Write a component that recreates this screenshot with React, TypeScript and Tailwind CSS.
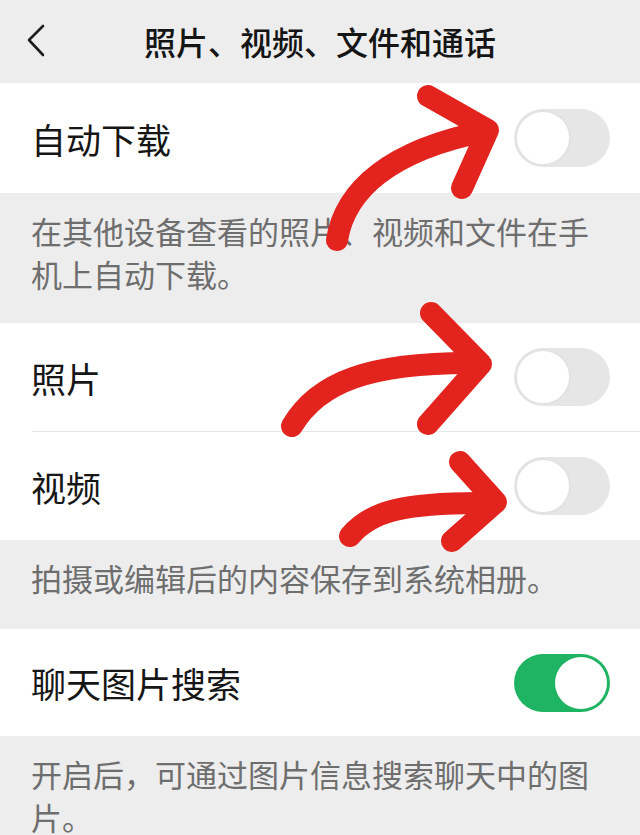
import React from 'react'

const font = { fontFamily: '"Noto Sans CJK SC", "Noto Sans", sans-serif' }

function Toggle({ on = false }: { on?: boolean }) {
  if (on) {
    return (
      <div className="w-[96px] h-[58px] rounded-full bg-[#1fb463] flex items-center justify-end pr-[3px]">
        <div className="w-[52px] h-[52px] rounded-full bg-white" />
      </div>
    )
  }
  return (
    <div className="w-[96px] h-[58px] rounded-full bg-[#e6e6e6] flex items-center pl-[1px]">
      <div className="w-[56px] h-[56px] rounded-full bg-white border-2 border-[#e2e2e2]" />
    </div>
  )
}

function Row({ label, on, h = 'h-[108px]' }: { label: string; on?: boolean; h?: string }) {
  return (
    <div className={`${h} bg-white flex items-center justify-between pl-[31px] pr-[30px]`}>
      <span className="text-[35px] leading-none text-[#161616]">{label}</span>
      <Toggle on={on} />
    </div>
  )
}

function Note({ children, pb = 'pb-[28px]' }: { children: React.ReactNode; pb?: string }) {
  return (
    <div className={`pl-[31px] pr-[50px] pt-[16px] ${pb} text-[31px] leading-[43px] text-[#6e6e6e]`}>
      {children}
    </div>
  )
}

export default function App() {
  return (
    <div className="relative w-[640px] h-[835px] overflow-hidden bg-[#ededed]" style={font}>
      {/* header */}
      <div className="h-[83px] flex items-center pb-[2px]">
        <div className="w-[80px] pl-[26px]">
          <svg width="22" height="34" viewBox="0 0 22 34" fill="none">
            <polyline points="17,2 3,16 17,31" stroke="#1e1e1e" strokeWidth="2.6" strokeLinecap="round" strokeLinejoin="round" />
          </svg>
        </div>
        <div className="flex-1 text-center text-[32px] font-medium text-[#151515] leading-none">照片、视频、文件和通话</div>
        <div className="w-[80px]" />
      </div>

      <Row label="自动下载" h="h-[110px]" />
      <Note>在其他设备查看的照片、视频和文件在手机上自动下载。</Note>

      <Row label="照片" />
      <div className="bg-white">
        <div className="ml-[32px] h-px bg-[#e6e6e6]" />
      </div>
      <Row label="视频" />
      <Note pb="pb-[30px]">拍摄或编辑后的内容保存到系统相册。</Note>

      <Row label="聊天图片搜索" on h="h-[107px]" />
      <Note>开启后，可通过图片信息搜索聊天中的图片。</Note>

      {/* red arrows drawn over the screenshot */}
      <svg className="absolute inset-0 pointer-events-none" width="640" height="835" viewBox="0 0 640 835" fill="none">
        <g stroke="#e3231d" strokeWidth="22" strokeLinecap="round" strokeLinejoin="round">
          <path d="M337 240 C 345 190 390 150 486 131" />
          <path d="M428 96 L 488 130 L 462 188" />
          <path d="M292 426 C 318 382 370 362 476 363" />
          <path d="M431 313 L 481 364 L 428 424" />
          <path d="M350 536 C 370 512 402 502 490 503" />
          <path d="M460 462 L 496 502 L 452 541" />
        </g>
      </svg>
    </div>
  )
}
